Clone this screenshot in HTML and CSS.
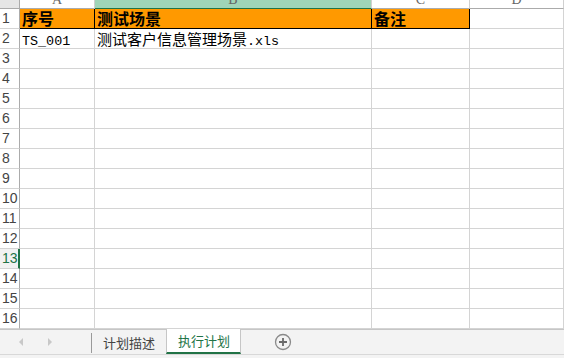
FILE: index.html
```html
<!DOCTYPE html>
<html>
<head>
<meta charset="utf-8">
<link rel="stylesheet" href="styles.css">
</head>
<body>
<div class="sheet">
  <div class="grid">
    <div class="corner"></div>
    <div class="colhead"><span>A</span></div>
    <div class="colhead sel"><span>B</span></div>
    <div class="colhead"><span>C</span></div>
    <div class="colhead"><span>D</span></div>

    <div class="rowhead">1</div>
    <div class="cell hd bl">序号</div>
    <div class="cell hd bl">测试场景</div>
    <div class="cell hd bl">备注</div>
    <div class="cell"></div>

    <div class="rowhead">2</div>
    <div class="cell txt"><span class="lat">TS_001</span></div>
    <div class="cell txt">测试客户信息管理场景<span class="lat">.xls</span></div>
    <div class="cell"></div>
    <div class="cell"></div>

    <div class="rowhead">3</div><div class="cell"></div><div class="cell"></div><div class="cell"></div><div class="cell"></div>
    <div class="rowhead">4</div><div class="cell"></div><div class="cell"></div><div class="cell"></div><div class="cell"></div>
    <div class="rowhead">5</div><div class="cell"></div><div class="cell"></div><div class="cell"></div><div class="cell"></div>
    <div class="rowhead">6</div><div class="cell"></div><div class="cell"></div><div class="cell"></div><div class="cell"></div>
    <div class="rowhead">7</div><div class="cell"></div><div class="cell"></div><div class="cell"></div><div class="cell"></div>
    <div class="rowhead">8</div><div class="cell"></div><div class="cell"></div><div class="cell"></div><div class="cell"></div>
    <div class="rowhead">9</div><div class="cell"></div><div class="cell"></div><div class="cell"></div><div class="cell"></div>
    <div class="rowhead">10</div><div class="cell"></div><div class="cell"></div><div class="cell"></div><div class="cell"></div>
    <div class="rowhead">11</div><div class="cell"></div><div class="cell"></div><div class="cell"></div><div class="cell"></div>
    <div class="rowhead">12</div><div class="cell"></div><div class="cell"></div><div class="cell"></div><div class="cell"></div>
    <div class="rowhead active">13</div><div class="cell"></div><div class="cell"></div><div class="cell"></div><div class="cell"></div>
    <div class="rowhead">14</div><div class="cell"></div><div class="cell"></div><div class="cell"></div><div class="cell"></div>
    <div class="rowhead">15</div><div class="cell"></div><div class="cell"></div><div class="cell"></div><div class="cell"></div>
    <div class="rowhead">16</div><div class="cell"></div><div class="cell"></div><div class="cell"></div><div class="cell"></div>
  </div>
  <div class="tabbar">
    <div class="nav">
      <svg width="8" height="10" viewBox="0 0 8 10"><path d="M6 1 L2 5 L6 9 Z" fill="#c8c8c8"/></svg>
      <svg width="8" height="10" viewBox="0 0 8 10"><path d="M2 1 L6 5 L2 9 Z" fill="#c8c8c8"/></svg>
    </div>
    <div class="sep"></div>
    <div class="tab">计划描述</div>
    <div class="tab active">执行计划</div>
    <div class="add">
      <svg width="18" height="18" viewBox="0 0 18 18"><circle cx="9" cy="9" r="7.5" fill="none" stroke="#8a8a8a" stroke-width="1.3"/><path d="M9 5 V13 M5 9 H13" stroke="#6a6a6a" stroke-width="1.8"/></svg>
    </div>
  </div>
  <div class="bottom"></div>
</div>
</body>
</html>
```
FILE: styles.css
```css
html, body {
  margin: 0;
  padding: 0;
  background: #ffffff;
}
.sheet {
  width: 564px;
  height: 358px;
  overflow: hidden;
  display: flex;
  flex-direction: column;
}
.grid {
  display: grid;
  grid-template-columns: 20px 75px 277px 98px 94px;
  grid-template-rows: 9px repeat(16, 20px);
}
.corner, .colhead, .rowhead, .cell {
  box-sizing: border-box;
  border-right: 1px solid #d4d4d4;
  border-bottom: 1px solid #d4d4d4;
  overflow: hidden;
}
.corner {
  background: #e6e6e6;
  border-color: #ababab;
}
.colhead {
  background: #ffffff;
  border-bottom: 1px solid #ababab;
  border-right: 1px solid #d0d0d0;
  font-family: "Liberation Serif", serif;
  font-size: 14px;
  color: #666;
  text-align: center;
}
.colhead span {
  display: block;
  line-height: 14px;
  margin-top: -7px;
}
.colhead.sel {
  background: #9fd5b7;
  border-bottom-color: #217346;
}
.rowhead {
  border-right: 1px solid #ababab;
  font-family: "Liberation Sans", sans-serif;
  font-size: 14px;
  color: #444;
  line-height: 19px;
  padding-left: 2px;
}
.rowhead.active {
  color: #217346;
  border-right: 2px solid #217346;
  background: #f2f2f2;
}
.cell.hd {
  background: #ff9900;
  font-family: "Noto Sans CJK SC", sans-serif;
  font-weight: 700;
  font-size: 16px;
  line-height: 19px;
  color: #000;
  padding-left: 2px;
  border-bottom: 1px solid #000;
  border-right: 1px solid #000;
}
.cell.txt {
  font-family: "Noto Sans CJK SC", sans-serif;
  font-size: 15px;
  line-height: 19px;
  color: #000;
  padding-left: 2px;
  white-space: nowrap;
}
.lat {
  font-family: "Liberation Mono", monospace;
  font-size: 13.4px;
}
.tabbar {
  height: 24px;
  background: #f3f3f3;
  border-top: 1px solid #c6c6c6;
  display: flex;
  align-items: stretch;
  font-family: "Noto Sans CJK SC", sans-serif;
  font-size: 13px;
}
.nav {
  width: 91px;
  display: flex;
  align-items: center;
  padding-left: 17px;
  gap: 21px;
  box-sizing: border-box;
}
.sep {
  width: 1px;
  background: #9a9a9a;
  margin: 3px 0 1px 0;
}
.tab {
  padding: 0 11px;
  display: flex;
  align-items: center;
  color: #444;
  line-height: 1;
  white-space: nowrap;
}
.tab.active {
  background: #ffffff;
  color: #217346;
  border-left: 1px solid #c6c6c6;
  border-right: 1px solid #c6c6c6;
  border-bottom: 2px solid #217346;
  margin-top: -1px;
  padding: 0 10px 0 11px;
}
.add {
  margin-left: 33px;
  display: flex;
  align-items: center;
}
.bottom {
  flex: 1;
  border-top: 1px solid #d8d8d8;
  background: #f3f3f3;
}
```
